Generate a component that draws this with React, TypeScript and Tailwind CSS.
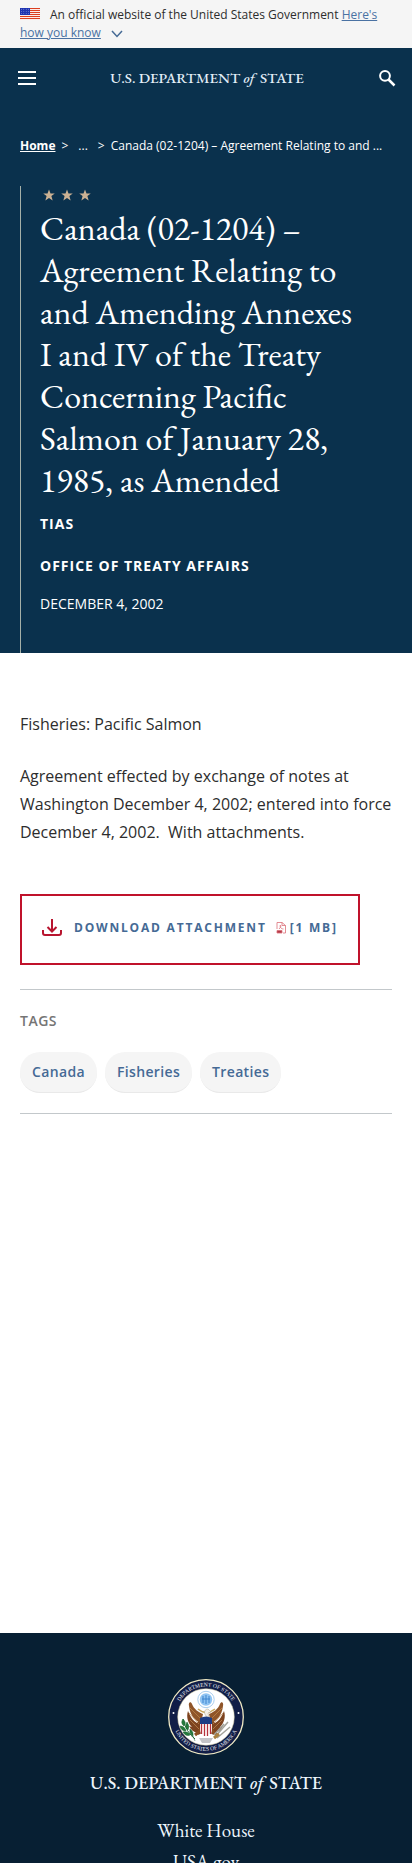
import type { ReactNode } from "react";

const serif = "font-['EB_Garamond','Liberation_Serif',serif]";

function Flag() {
  return (
    <svg viewBox="0 0 20 12" className="mr-2.5 inline-block h-3 w-5 align-[-1px]" aria-hidden="true">
      <rect width="20" height="12" fill="#fff" />
      {[0, 2, 4, 6, 8, 10].map((y) => (
        <rect key={y} y={y} width="20" height="1.1" fill="#db3e1f" />
      ))}
      <rect width="10" height="7" fill="#1e33b1" />
      {[1.2, 3.4, 5.6].map((y) =>
        [1.4, 3.8, 6.2, 8.6].map((x) => <circle key={`${x}-${y}`} cx={x} cy={y} r="0.45" fill="#b8c4f0" />)
      )}
    </svg>
  );
}

function Wordmark({ className }: { className: string }) {
  return (
    <span className={`font-['EB_Garamond','Liberation_Serif',serif] font-medium whitespace-nowrap ${className}`}>
      U.S. DEPARTMENT <i className="mr-0.5">of</i> STATE
    </span>
  );
}

function Star() {
  return (
    <svg viewBox="0 0 24 24" className="h-3 w-3" fill="#cbb193" aria-hidden="true">
      <path d="M12 1l3 8h8.500l-6.700 5.200L19.300 23 12 17.800 4.700 23l2.500-8.800L.5 9H9z" />
    </svg>
  );
}

function Seal() {
  const wing = (
    <g>
      <path
        d="M34 37L29 44C25 42 22 37 20 32C18 38 20 44 24 48L21 47C23 51 26 53 29 54C29 57 32 56 34 53Z"
        fill="#7d431f"
      />
      <path d="M21 27C20 23 23 22 24 25C26 30 30 33 35 35L33 44C27 42 22 36 21 27Z" fill="#8f5529" />
      <path d="M22 29L32 39M21 34L31 45M22 41L31 50" stroke="#c28b50" strokeWidth="0.7" fill="none" />
    </g>
  );
  return (
    <svg viewBox="0 0 76 76" className="h-19 w-19 shrink-0" role="img" aria-label="Seal of the Department of State">
      <defs>
        <path id="seal-top" d="M7.500 38a30.500 30.500 0 0 1 61 0" />
        <path id="seal-bottom" d="M4.200 38a33.800 33.800 0 0 0 67.600 0" />
      </defs>
      <circle cx="38" cy="38" r="37.300" fill="#111d47" stroke="#efe9c4" strokeWidth="1.300" />
      <circle cx="38" cy="38" r="28.300" fill="#fff" stroke="#d9cfa0" strokeWidth="0.5" />
      <g fill="#eef0f5" fontSize="5.600" fontFamily="Liberation Serif" textAnchor="middle">
        <text>
          <textPath href="#seal-top" startOffset="50%">DEPARTMENT OF STATE</textPath>
        </text>
        <text>
          <textPath href="#seal-bottom" startOffset="50%">UNITED STATES OF AMERICA</textPath>
        </text>
      </g>
      <circle cx="5.500" cy="34" r="1" fill="#fff" />
      <circle cx="70.500" cy="34" r="1" fill="#fff" />
      <circle cx="38" cy="20.500" r="8.200" fill="#fff" stroke="#a8cdee" strokeWidth="1" />
      <circle cx="38" cy="20.500" r="6.200" fill="#8fc4f3" />
      <path d="M35 17v7M38 16v9M41 17v7M34 20h8" stroke="#3f86cf" strokeWidth="1" />
      {wing}
      <g transform="translate(76 0) scale(-1 1)">{wing}</g>
      <path d="M30 30q8 7 17 0" stroke="#c9a75c" strokeWidth="1.500" fill="none" />
      <path d="M38 37c-3-4-1-7 2-7l3 3-3 1 1 5z" fill="#f4f0e8" stroke="#9b8d70" strokeWidth="0.400" />
      <path d="M33 51l-6 5M43 51l6 5" stroke="#8a4f22" strokeWidth="3" />
      <path d="M31 59h14l-3 5h-8z" fill="#c4c4c8" />
      <path d="M32 42h12v9q0 5-6 8-6-3-6-8z" fill="#fff" />
      <path d="M33.500 43v12M36.500 43v14M39.500 43v14M42.500 43v12" stroke="#b5313b" strokeWidth="1.300" />
      <path d="M32 39q6-3 12 0v6H32z" fill="#1c3d85" />
      <path d="M15 40q3 13 12 20" stroke="#1f6b35" strokeWidth="1" fill="none" />
      <path
        d="M15 40q-3 4 1 7 3-3-1-7M12 47q1 5 6 5-1-5-6-5M15 53q3 5 7 3-2-4-7-3M19 43q-3 5 1 8 2-4-1-8M22 50q-1 5 3 7 1-4-3-7M25 57l2 5"
        fill="#257a3c"
        stroke="#1b5f2e"
        strokeWidth="0.500"
      />
      <path d="M47 58l13-15M49 59l13-11M46 56l10-11" stroke="#a3a39b" strokeWidth="1.500" />
      <path d="M46 59l5-4" stroke="#a9803f" strokeWidth="3" />
    </svg>
  );
}

function Tag({ children }: { children: ReactNode }) {
  return (
    <li>
      <a href="#tag" className="block rounded-[20px] border-b border-[#e9e9e9] bg-[#f5f5f5] px-3 text-sm leading-10 font-semibold tracking-wide text-[#456a95]">
        {children}
      </a>
    </li>
  );
}

export default function App() {
  return (
    <div className="flex h-screen flex-col overflow-hidden bg-white font-['Open_Sans',sans-serif] text-[#2d2d2d]">
      <div className="bg-[#f5f5f5] px-5 py-1.5 text-xs leading-[18px]">
        <Flag />
        An official website of the United States Government{" "}
        <a href="#banner" className="text-[#4a72a3] underline">Here's how you know</a>
        <svg viewBox="0 0 12 8" className="ml-2.5 inline-block h-2 w-3 align-[-1px]" fill="none" stroke="#456a95" strokeWidth="1.500" aria-hidden="true">
          <path d="M1 1l5 5.500L11 1" />
        </svg>
      </div>

      <div className="bg-[#0a314d] text-white">
        <header className="flex h-[60px] items-center justify-between pr-4 pl-[18px]">
          <button type="button" aria-label="Menu" className="flex w-[18px] flex-col gap-1">
            <span className="h-0.5 bg-white" />
            <span className="h-0.5 bg-white" />
            <span className="h-0.5 bg-white" />
          </button>
          <a href="#home" className="flex text-[#e3eef8]">
            <Wordmark className="text-[15px] leading-5" />
          </a>
          <button type="button" aria-label="Search">
            <svg viewBox="0 0 18 18" className="h-[18px] w-[18px]" fill="none" stroke="#fff" strokeWidth="2" aria-hidden="true">
              <circle cx="7" cy="6.800" r="4.900" />
              <path d="M10.500 10.500l6 6" strokeWidth="2.500" />
            </svg>
          </button>
        </header>

        <nav aria-label="Breadcrumb" className="px-5 pt-7">
          <ol className="flex gap-1.5 text-xs leading-5">
            <li><a href="#home" className="font-bold underline">Home</a></li>
            <li aria-hidden="true">&gt;</li>
            <li className="px-1">...</li>
            <li aria-hidden="true">&gt;</li>
            <li className="whitespace-nowrap">Canada (02-1204) – Agreement Relating to and ...</li>
          </ol>
        </nav>

        <div className="mt-[30px] ml-5 border-l border-[#a5b0a8] pr-5 pb-[37px] pl-[19px]">
          <div className="flex gap-1.5 pt-[3px] pl-[3px]">
            <Star /><Star /><Star />
          </div>
          <h1 className={`${serif} mt-1.5 text-[34px] leading-[42px]`}>
            Canada (02-1204) –<br />
            Agreement Relating to<br />
            and Amending Annexes<br />
            I and IV of the Treaty<br />
            Concerning Pacific<br />
            Salmon of January 28,<br />
            1985, as Amended
          </h1>
          <p className="mt-[11px] text-sm leading-6 font-bold tracking-[1px]">TIAS</p>
          <p className="mt-[18px] text-sm leading-6 font-bold tracking-[1px]">OFFICE OF TREATY AFFAIRS</p>
          <p className="mt-3.5 text-sm leading-6">DECEMBER 4, 2002</p>
        </div>
      </div>

      <main className="px-5 pt-[57px] pb-[519px]">
        <p className="leading-7">Fisheries: Pacific Salmon</p>
        <p className="mt-6 leading-7">
          Agreement effected by exchange of notes at<br />Washington December 4, 2002; entered into force<br />December 4, 2002.&nbsp; With attachments.
        </p>
        <a
          href="#download"
          className="mt-12 inline-flex h-[71px] items-center border-2 border-[#c0122b] px-5 pb-1 text-xs font-bold tracking-[0.15em] whitespace-nowrap text-[#456a95]"
        >
          <svg viewBox="0 0 20 18" className="mr-3 h-[18px] w-5" fill="none" stroke="#b8152f" strokeWidth="2" aria-hidden="true">
            <path d="M10 0v12M5.500 8l4.500 4.500L14.500 8M1 11v3q0 2 2 2h14q2 0 2-2v-3" />
          </svg>
          DOWNLOAD ATTACHMENT
          <svg viewBox="0 0 11 12" className="mr-1 ml-2 h-3 w-[11px]" fill="none" stroke="#dc7078" strokeWidth="0.800" aria-hidden="true">
            <path d="M2 7V.5h5l3.500 3V11H8M7 .5v3h3.500M4 7c2-2 2-3 1.500-4-1 1 0 4 3 4" />
            <path d="M2 8.500h5v2.500H2z" fill="#b23a48" />
          </svg>
          [1 MB]
        </a>
        <section className="mt-6 border-y border-[#c3c8cb] pt-[19px] pb-5">
          <h2 className="text-sm leading-6 font-semibold tracking-[0.5px] text-[#757575]">TAGS</h2>
          <ul className="mt-[19px] flex gap-2">
            <Tag>Canada</Tag>
            <Tag>Fisheries</Tag>
            <Tag>Treaties</Tag>
          </ul>
        </section>
      </main>

      <footer className="flex min-h-0 flex-1 flex-col items-center overflow-hidden bg-[#071f33] pt-[46px] text-[#edf5fc]">
        <Seal />
        <a href="#home" className="mt-4 flex">
          <Wordmark className="text-lg leading-6" />
        </a>
        <nav aria-label="Footer" className={`${serif} mt-5 flex flex-col items-center text-[19px] leading-[31px]`}>
          <a href="#whitehouse">White House</a>
          <a href="#usagov">USA.gov</a>
        </nav>
      </footer>
    </div>
  );
}
